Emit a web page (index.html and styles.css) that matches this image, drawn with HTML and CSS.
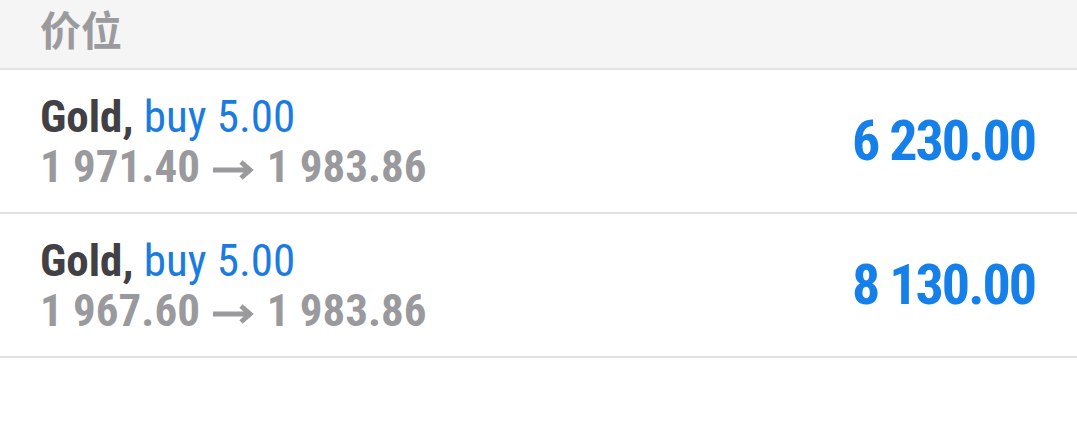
FILE: index.html
```html
<!DOCTYPE html>
<html lang="zh">
  <head>
    <meta charset="UTF-8" />
    <meta name="viewport" content="width=device-width, initial-scale=1.0" />
    <title>价位</title>
    <link rel="stylesheet" href="styles.css">
  </head>
  <body>
    <div class="section-header">价位</div>

    <div class="deal-list">
      <div class="deal-item">
        <div class="deal-details">
          <div class="deal-title"><b>Gold,</b> <span class="deal-type">buy 5.00</span></div>
          <div class="deal-prices">
            1 971.40
            <svg class="arrow" width="42" height="20" viewBox="0 0 42 20"><path d="M1 10H38M29 2L38 10L29 18" /></svg>
            1 983.86
          </div>
        </div>
        <div class="deal-profit">6 230.00</div>
      </div>
      <div class="deal-item">
        <div class="deal-details">
          <div class="deal-title"><b>Gold,</b> <span class="deal-type">buy 5.00</span></div>
          <div class="deal-prices">
            1 967.60
            <svg class="arrow" width="42" height="20" viewBox="0 0 42 20"><path d="M1 10H38M29 2L38 10L29 18" /></svg>
            1 983.86
          </div>
        </div>
        <div class="deal-profit">8 130.00</div>
      </div>
    </div>
  </body>
</html>
```

FILE: styles.css
```css
body {
  font-family: "Roboto Condensed", Roboto, "Noto Sans CJK SC", sans-serif;
  margin: 0;
  background: #fff;
}

.section-header {
  background: #f5f5f5;
  color: #9b9b9f;
  font-family: "Noto Sans CJK SC", sans-serif;
  font-weight: bold;
  font-size: 41px;
  line-height: 56px;
  height: 70px;
  padding-left: 40px;
  border-bottom: 2px solid #e3e3e3;
  box-sizing: border-box;
}

.deal-item {
  display: flex;
  align-items: center;
  height: 144px;
  padding: 2px 42px 0 40px;
  border-bottom: 2px solid #e3e3e3;
  box-sizing: border-box;
}

.deal-details {
  flex-grow: 1;
}

.deal-title,
.deal-prices {
  font-size: 45px;
  line-height: 50px;
  white-space: nowrap;
}

.deal-title b {
  color: #404045;
}

.deal-type {
  color: #1a7be0;
}

.deal-prices {
  color: #9a9a9e;
  font-weight: bold;
}

.arrow {
  vertical-align: middle;
  margin: 0 2px;
}

.arrow path {
  fill: none;
  stroke: #9a9a9e;
  stroke-width: 5;
}

.deal-profit {
  color: #1580ea;
  font-size: 56px;
  letter-spacing: -2px;
  font-weight: bold;
  margin-top: -2px;
}
```
